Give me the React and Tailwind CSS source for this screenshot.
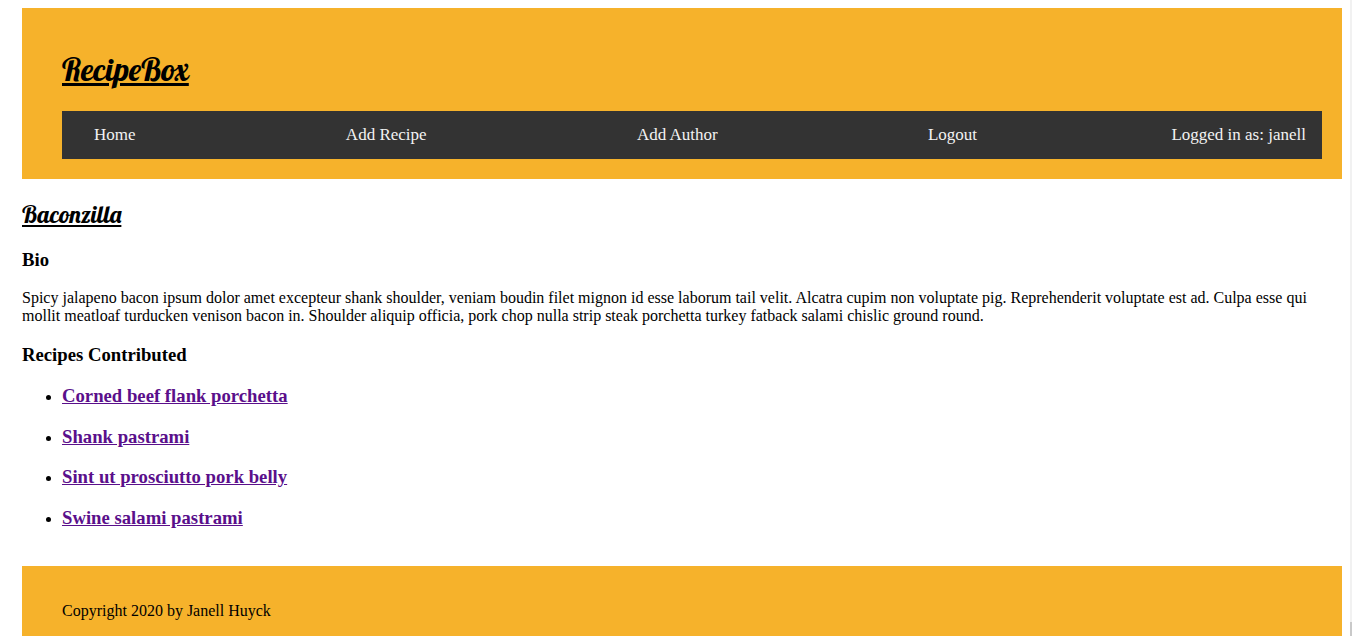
const recipes = [
  'Corned beef flank porchetta',
  'Shank pastrami',
  'Sint ut prosciutto pork belly',
  'Swine salami pastrami',
];

const links = ['Home', 'Add Recipe', 'Add Author', 'Logout'];

function Header() {
  return (
    <header className="h-[171px] bg-[#f6b22b] pt-10 pr-5 pl-10">
      <h1 className="h-[63px] pt-px font-['Lobster','Liberation_Serif',serif] text-[32px] leading-10 font-normal">
        <a className="underline">RecipeBox</a>
      </h1>
      <nav className="flex h-12 items-center justify-between bg-[#333333] pl-4 text-[17px] leading-5 text-[#f2f2f2]">
        {links.map((label) => (
          <a key={label} className="px-4">
            {label}
          </a>
        ))}
        <span className="pr-4">Logged in as: janell</span>
      </nav>
    </header>
  );
}

export default function App() {
  return (
    <div className="flex h-[636px] justify-between overflow-hidden bg-white pl-[22px] font-['Liberation_Serif',serif] text-base leading-[18px] text-black">
      <div className="w-[1320px] pt-2">
        <Header />
        <main className="h-[387px] pt-5">
          <h2 className="h-[30px] font-['Lobster','Liberation_Serif',serif] text-[24px] leading-[30px] font-normal">
            <span className="underline">Baconzilla</span>
          </h2>
          <h3 className="mt-5 text-[18.72px] leading-[21px] font-bold">Bio</h3>
          <p className="mt-[19px]">
            Spicy jalapeno bacon ipsum dolor amet excepteur shank shoulder, veniam boudin filet mignon id esse laborum
            tail velit. Alcatra cupim non voluptate pig. Reprehenderit voluptate est ad. Culpa esse qui mollit meatloaf
            turducken venison bacon in. Shoulder aliquip officia, pork chop nulla strip steak porchetta turkey fatback
            salami chislic ground round.
          </p>
          <h3 className="mt-[19px] text-[18.72px] leading-[21px] font-bold">Recipes Contributed</h3>
          <ul className="mt-5 list-disc space-y-[19.6px] pl-10">
            {recipes.map((name) => (
              <li key={name}>
                <h3 className="text-[18.72px] leading-[21px] font-bold text-[#5a0f8b]">
                  <a className="underline">{name}</a>
                </h3>
              </li>
            ))}
          </ul>
        </main>
        <footer className="h-[70px] bg-[#f6b22b] pt-9 pl-10">
          <p>Copyright 2020 by Janell Huyck</p>
        </footer>
      </div>
      <div className="flex w-[2px] flex-col justify-end bg-[#f1f1f1]">
        <div className="h-[14px] bg-[#c9c9c9]" />
      </div>
    </div>
  );
}
